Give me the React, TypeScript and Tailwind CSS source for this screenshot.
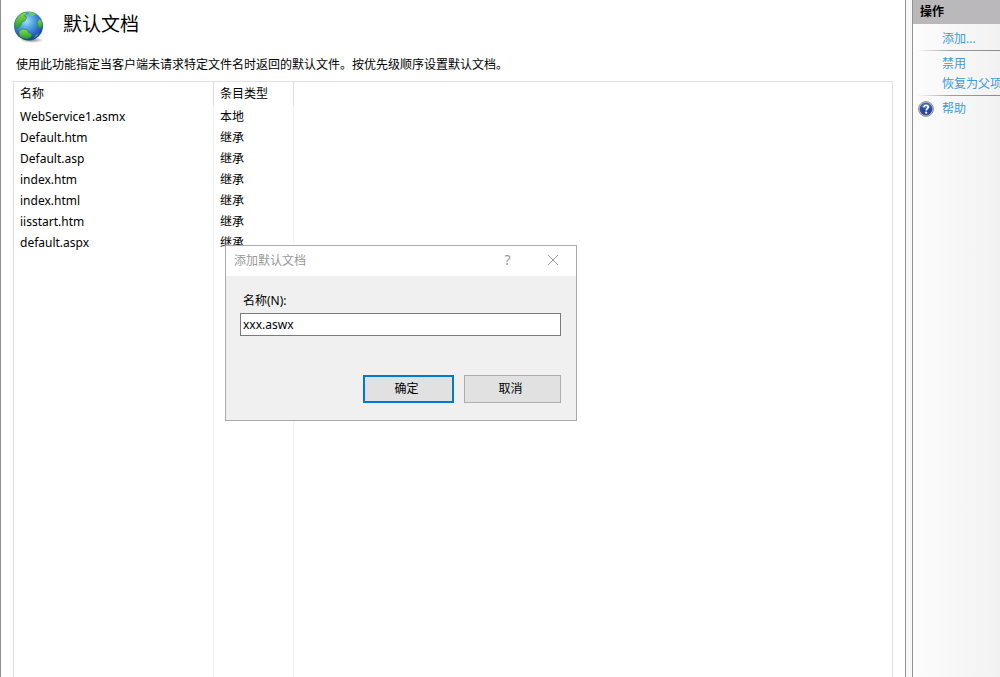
import { useState } from "react";

interface DocumentEntry {
  name: string;
  type: string;
}

const DOCUMENTS: DocumentEntry[] = [
  { name: "WebService1.asmx", type: "本地" },
  { name: "Default.htm",      type: "继承" },
  { name: "Default.asp",      type: "继承" },
  { name: "index.htm",        type: "继承" },
  { name: "index.html",       type: "继承" },
  { name: "iisstart.htm",     type: "继承" },
  { name: "default.aspx",     type: "继承" },
];

const GlobeIcon = () => (
  <svg viewBox="0 0 32 32" className="size-8 shrink-0" aria-hidden="true">
    <defs>
      <radialGradient id="ocean" cx="42%" cy="32%" r="70%">
        <stop offset="0" stopColor="#a8e2fa" />
        <stop offset="0.35" stopColor="#56a9e6" />
        <stop offset="0.75" stopColor="#2a62c4" />
        <stop offset="1" stopColor="#1b3d92" />
      </radialGradient>
      <linearGradient id="land" x1="0" y1="0" x2="0" y2="1">
        <stop offset="0" stopColor="#8edb4c" />
        <stop offset="1" stopColor="#1f9a35" />
      </linearGradient>
      <radialGradient id="shadow">
        <stop offset="0" stopColor="#555" stopOpacity="0.7" />
        <stop offset="1" stopColor="#555" stopOpacity="0" />
      </radialGradient>
    </defs>
    <ellipse cx="19" cy="29" rx="12" ry="3" fill="url(#shadow)" />
    <circle cx="15.500" cy="15" r="14.500" fill="url(#ocean)" />
    <path d="M2 11C4 5 8 2 13 1l1 2-3 2 3 1-2 4-3 1-1 3-4 4-2-2z" fill="url(#land)" stroke="#257d3c" strokeWidth=".5" />
    <path d="M16 1l5 1 1 2-4 1-2-2z" fill="#76cf58" />
    <path d="M26 8l2.500 1.500 1 5-2 3-2.500-1-1-4z" fill="url(#land)" stroke="#257d3c" strokeWidth=".5" />
    <path d="M6 20l4-2 4 1 2 3 3 1-1 3-4 2-5-1-3-3z" fill="url(#land)" stroke="#1e7b39" strokeWidth=".5" />
    <path d="M23 24l3-2-2 3-3 2z" fill="#48b85a" />
  </svg>
);

const HelpIcon = () => (
  <svg viewBox="0 0 16 16" className="size-4 shrink-0" aria-hidden="true">
    <circle cx="8" cy="8" r="7.500" fill="#c4c4c4" stroke="#858585" strokeWidth=".8" />
    <circle cx="8" cy="8" r="6" fill="#2549a8" stroke="#1c347e" strokeWidth=".6" />
    <path d="M3 6a5.200 5.200 0 0 1 10 0q-5 3-10 0z" fill="#5c83d6" opacity=".6" />
    <path d="M5.900 6.200C5.900 3.700 10.300 3.700 10.300 6.200 10.300 7.700 8.200 7.700 8.200 9.600" fill="none" stroke="#fff" strokeWidth="1.700" />
    <circle cx="8.200" cy="11.700" r="1.100" fill="#fff" />
  </svg>
);

const Separator = () => (
  <hr className="ml-1 h-px border-0 bg-linear-to-r from-transparent via-[#a0a0a0] via-40% to-[#8a8a8a]" />
);

const ActionLink = ({ label }: { label: string }) => (
  <a href="#" className="block pl-[29px] whitespace-nowrap hover:underline">
    {label}
  </a>
);

const DocumentTable = () => (
  <table className="h-full w-full table-fixed border-separate border-spacing-0 text-left">
    <colgroup>
      <col className="w-[200px]" />
      <col className="w-[80px]" />
      <col />
    </colgroup>
    <thead>
      <tr className="h-6">
        <th className="border-r border-[#e0e0e0] p-0 pl-1.5 font-normal">名称</th>
        <th className="border-r border-[#e0e0e0] p-0 pl-1.5 font-normal">条目类型</th>
        <td />
      </tr>
    </thead>
    <tbody>
      {DOCUMENTS.map((doc) => (
        <tr key={doc.name} className="h-[21px]">
          <td className="border-r border-[#edf3fa] p-0 pl-1.5">{doc.name}</td>
          <td className="border-r border-[#edf3fa] p-0 pl-1.5">{doc.type}</td>
          <td />
        </tr>
      ))}
      {/* keeps the column lines running to the bottom of the list */}
      <tr className="h-full">
        <td className="border-r border-[#edf3fa]" />
        <td className="border-r border-[#edf3fa]" />
        <td />
      </tr>
    </tbody>
  </table>
);

const AddDocumentDialog = () => {
  const [name, setName] = useState("xxx.aswx");

  return (
    <div
      role="dialog"
      aria-labelledby="dialog-title"
      className="absolute top-[245px] left-[225px] w-[352px] border border-[#aaaaaa] bg-[#f0f0f0]"
    >
      <div className="flex h-[30px] items-center bg-white pr-px pl-2 text-[#999999]">
        <h2 id="dialog-title" className="flex-1">添加默认文档</h2>
        <button type="button" aria-label="帮助" className="h-full w-[45px] pb-0.5 text-sm">?</button>
        <button type="button" aria-label="关闭" className="flex h-full w-[45px] items-center justify-center pb-0.5">
          <svg viewBox="0 0 12 12" className="size-3" fill="none" stroke="currentColor" aria-hidden="true">
            <path d="M1 1l10 10M11 1L1 11" />
          </svg>
        </button>
      </div>
      <form className="pt-[17px] pr-[15px] pb-[17px] pl-3.5" onSubmit={(e) => e.preventDefault()}>
        <label htmlFor="document-name" className="block pl-[3px] leading-4">名称(N):</label>
        <input
          id="document-name"
          type="text"
          value={name}
          onChange={(e) => setName(e.target.value)}
          className="mt-1 block h-[23px] w-full border border-[#7a7a7a] bg-white px-0.5 outline-none"
        />
        <div className="mt-[39px] flex justify-end gap-2.5">
          <button type="submit" className="h-7 w-[91px] border-2 border-[#0078d7] bg-[#e1e1e1] pr-1">确定</button>
          <button type="button" className="h-7 w-[97px] border border-[#adadad] bg-[#e1e1e1] pr-1">取消</button>
        </div>
      </form>
    </div>
  );
};

export default function App() {
  return (
    <div className="relative flex h-screen overflow-hidden bg-white font-['Noto_Sans','Noto_Sans_CJK_SC',sans-serif] text-xs text-black">
      <main className="flex min-w-0 flex-1 flex-col border-x border-[#929292] px-3">
        <header className="flex h-[55px] items-center gap-[18px] pb-0.5">
          <GlobeIcon />
          <h1 className="pb-1 text-[19px]">默认文档</h1>
        </header>
        <p className="mb-1.5 pl-[3px] leading-5">
          使用此功能指定当客户端未请求特定文件名时返回的默认文件。按优先级顺序设置默认文档。
        </p>
        <div className="min-h-0 flex-1 border-x border-t border-[#e0e0e0]">
          <DocumentTable />
        </div>
      </main>

      <div className="w-1.5 bg-[#f8f8f8]" />

      <aside className="w-[88px] shrink-0 overflow-hidden border-l border-[#929292] bg-linear-to-r from-[#fcfcfc] to-[#f2f2f2] leading-5 text-[#3e9bd6]">
        <h2 className="h-6 bg-[#bbb8bb] pl-[7px] leading-6 font-bold text-black">操作</h2>
        <nav className="pt-[5px]">
          <ActionLink label="添加..." />
          <div className="pt-px"><Separator /></div>
          <div className="pt-[3px] pb-px">
            <ActionLink label="禁用" />
            <ActionLink label="恢复为父项" />
          </div>
          <Separator />
          <a href="#" className="flex items-center gap-2 pt-[3px] pl-[5px] hover:underline">
            <HelpIcon />
            帮助
          </a>
        </nav>
      </aside>

      <AddDocumentDialog />
    </div>
  );
}
